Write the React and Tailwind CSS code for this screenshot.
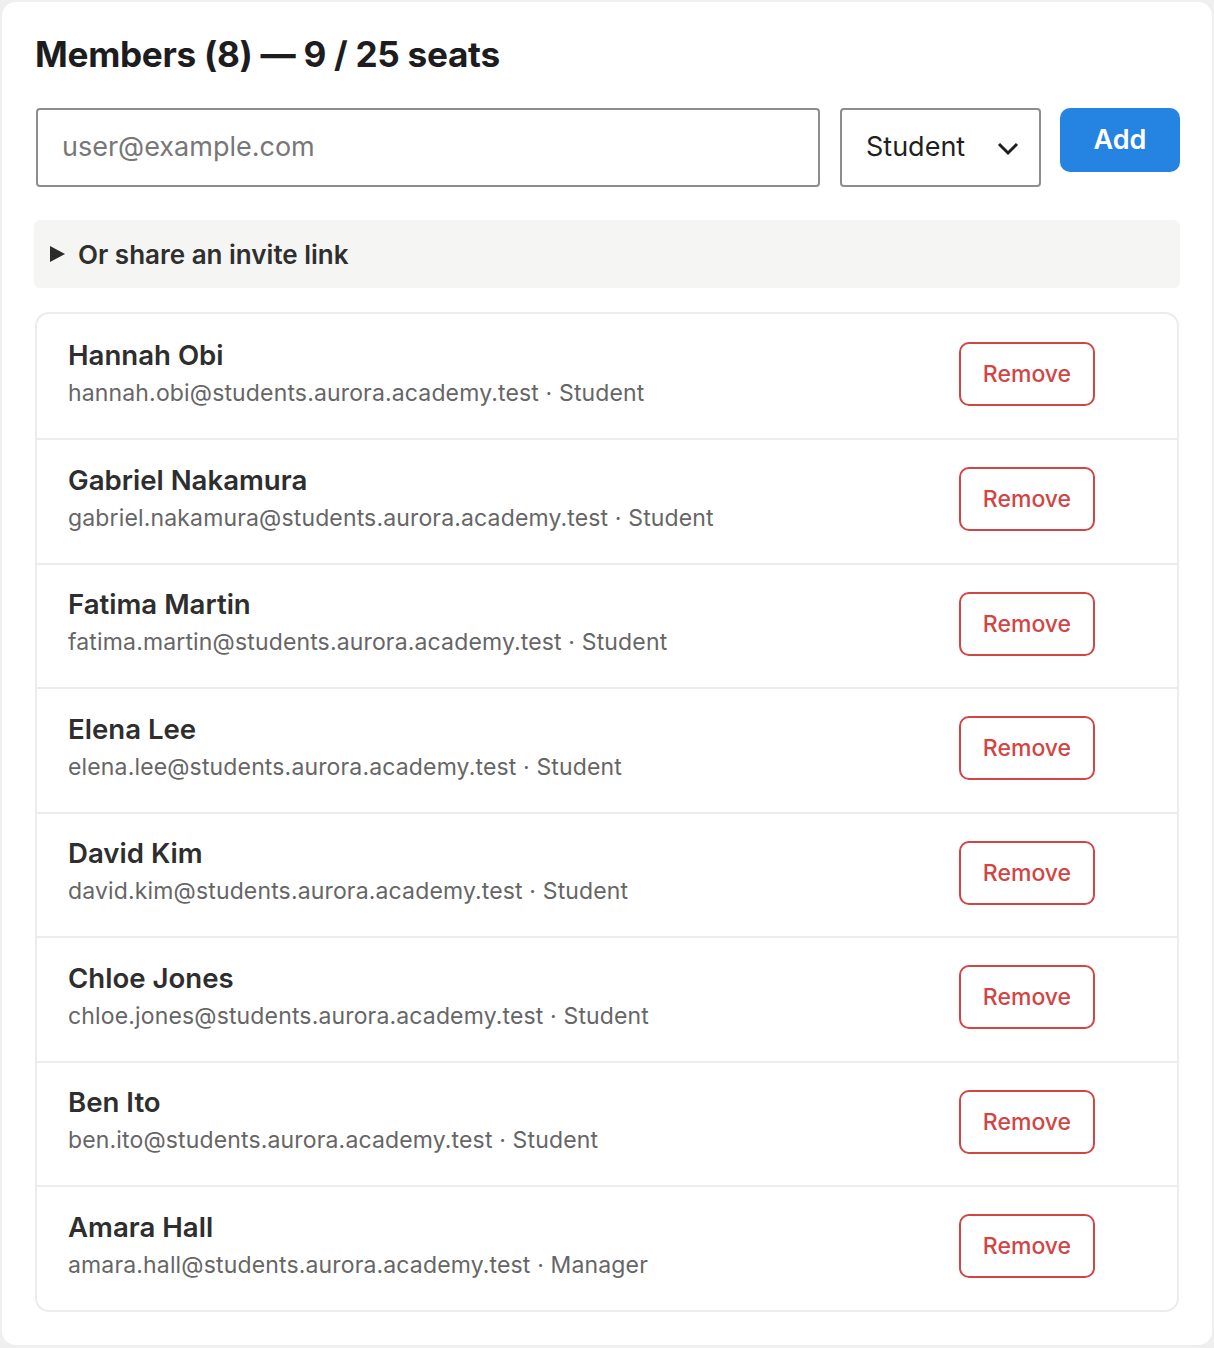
import React from "react";

const members = [
  ["Hannah Obi", "hannah.obi@students.aurora.academy.test", "Student"],
  ["Gabriel Nakamura", "gabriel.nakamura@students.aurora.academy.test", "Student"],
  ["Fatima Martin", "fatima.martin@students.aurora.academy.test", "Student"],
  ["Elena Lee", "elena.lee@students.aurora.academy.test", "Student"],
  ["David Kim", "david.kim@students.aurora.academy.test", "Student"],
  ["Chloe Jones", "chloe.jones@students.aurora.academy.test", "Student"],
  ["Ben Ito", "ben.ito@students.aurora.academy.test", "Student"],
  ["Amara Hall", "amara.hall@students.aurora.academy.test", "Manager"],
];

export default function App() {
  return (
    <div
      className="min-h-[1348px] bg-[#efefef] p-[2px]"
      style={{ fontFamily: "Inter, 'Noto Sans', sans-serif" }}
    >
      <div className="bg-white rounded-[14px] pt-[28px] pb-[33px] pl-[32px] pr-[32px] min-h-[1342px]">
        <h1 className="text-[35.2px] leading-[48px] font-bold text-[#1d1d1f] pl-[1px] tracking-[-0.3px]">
          Members (8) — 9 / 25 seats
        </h1>
        <div className="flex items-start mt-[30px] pl-[2px]">
          <div className="w-[784px] h-[79px] border-2 border-[#8d8d8d] rounded-[4px] flex items-center pl-[24px]">
            <span className="text-[27px] text-[#777]">user@example.com</span>
          </div>
          <div className="ml-[20px] w-[201px] h-[79px] border-2 border-[#8d8d8d] rounded-[4px] flex items-center pl-[24px] pr-[20px] justify-between">
            <span className="text-[27px] text-[#1f1f1f]">Student</span>
            <svg width="22" height="14" viewBox="0 0 22 14" className="mt-[2px]">
              <path d="M2 2 L11 11 L20 2" fill="none" stroke="#1f1f1f" strokeWidth="3" />
            </svg>
          </div>
          <button className="ml-[19px] w-[120px] h-[64px] rounded-[10px] bg-[#2584e2] text-white text-[27px] font-semibold flex items-center justify-center">
            Add
          </button>
        </div>
        <div className="mt-[33px] h-[68px] bg-[#f5f5f3] rounded-[6px] flex items-center pl-[16px]">
          <svg width="15" height="16" viewBox="0 0 15 16">
            <path d="M0 0 L15 8 L0 16 Z" fill="#2b2b2b" />
          </svg>
          <span className="ml-[13px] text-[26px] font-semibold text-[#2f2f2f]">Or share an invite link</span>
        </div>
        <div className="mt-[24px] ml-[1px] mr-[1px] border-2 border-[#ececec] rounded-[14px] overflow-hidden">
          {members.map(([name, email, role], i) => (
            <div
              key={name}
              className={
                "flex items-center justify-between pl-[31px] pr-[82px]" +
                (i > 0 ? " h-[124.5px] border-t-2 border-[#ececec]" : " h-[124px]")
              }
            >
              <div className="flex flex-col mb-[7px]">
                <span className="text-[27.6px] leading-[34px] font-semibold text-[#2e2e2e]">{name}</span>
                <span className="mt-[6px] text-[23px] tracking-[0.15px] leading-[30px] text-[#666]">
                  {email} · {role}
                </span>
              </div>
              <button className="mb-[4px] w-[136px] h-[64px] rounded-[10px] border-2 border-[#d24545] text-[#d24545] text-[23px] font-medium flex items-center justify-center">
                Remove
              </button>
            </div>
          ))}
        </div>
      </div>
    </div>
  );
}
